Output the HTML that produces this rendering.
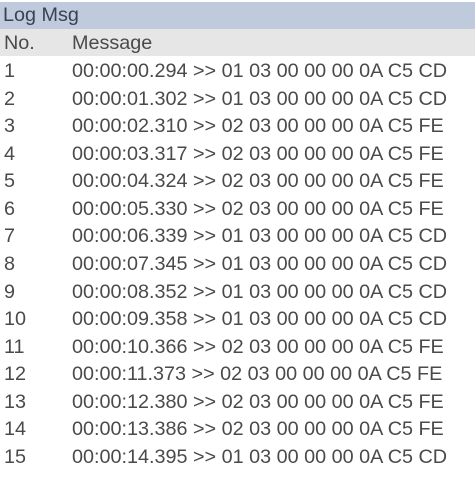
<!DOCTYPE html>
<html><head><style>
html,body{margin:0;padding:0;background:#fff;width:476px;height:483px;overflow:hidden}
body{font-family:"Liberation Sans",Arial,sans-serif;color:#4a4a4a;font-size:19.8px}
.t{position:absolute;left:0;top:2px;width:475px;height:27px;background:#bfcadd;color:#3a4250}
.t span{position:absolute;left:3px;top:2px}
.h{position:absolute;left:0;top:29px;width:475px;height:27px;background:#e6e6e6}
.r{position:absolute;left:0;width:475px;height:27px}
.n{position:absolute;left:4px;top:3px}
.m{position:absolute;left:72px;top:3px}
</style></head><body>
<div class="t"><span>Log Msg</span></div>
<div class="h"><span class="n">No.</span><span class="m">Message</span></div>
<div class="r" style="top:57px"><span class="n">1</span><span class="m">00:00:00.294 &gt;&gt; 01 03 00 00 00 0A C5 CD</span></div>
<div class="r" style="top:85px"><span class="n">2</span><span class="m">00:00:01.302 &gt;&gt; 01 03 00 00 00 0A C5 CD</span></div>
<div class="r" style="top:112px"><span class="n">3</span><span class="m">00:00:02.310 &gt;&gt; 02 03 00 00 00 0A C5 FE</span></div>
<div class="r" style="top:140px"><span class="n">4</span><span class="m">00:00:03.317 &gt;&gt; 02 03 00 00 00 0A C5 FE</span></div>
<div class="r" style="top:167px"><span class="n">5</span><span class="m">00:00:04.324 &gt;&gt; 02 03 00 00 00 0A C5 FE</span></div>
<div class="r" style="top:195px"><span class="n">6</span><span class="m">00:00:05.330 &gt;&gt; 02 03 00 00 00 0A C5 FE</span></div>
<div class="r" style="top:222px"><span class="n">7</span><span class="m">00:00:06.339 &gt;&gt; 01 03 00 00 00 0A C5 CD</span></div>
<div class="r" style="top:250px"><span class="n">8</span><span class="m">00:00:07.345 &gt;&gt; 01 03 00 00 00 0A C5 CD</span></div>
<div class="r" style="top:278px"><span class="n">9</span><span class="m">00:00:08.352 &gt;&gt; 01 03 00 00 00 0A C5 CD</span></div>
<div class="r" style="top:305px"><span class="n">10</span><span class="m">00:00:09.358 &gt;&gt; 01 03 00 00 00 0A C5 CD</span></div>
<div class="r" style="top:333px"><span class="n">11</span><span class="m">00:00:10.366 &gt;&gt; 02 03 00 00 00 0A C5 FE</span></div>
<div class="r" style="top:360px"><span class="n">12</span><span class="m">00:00:11.373 &gt;&gt; 02 03 00 00 00 0A C5 FE</span></div>
<div class="r" style="top:388px"><span class="n">13</span><span class="m">00:00:12.380 &gt;&gt; 02 03 00 00 00 0A C5 FE</span></div>
<div class="r" style="top:415px"><span class="n">14</span><span class="m">00:00:13.386 &gt;&gt; 02 03 00 00 00 0A C5 FE</span></div>
<div class="r" style="top:443px"><span class="n">15</span><span class="m">00:00:14.395 &gt;&gt; 01 03 00 00 00 0A C5 CD</span></div>
</body></html>
